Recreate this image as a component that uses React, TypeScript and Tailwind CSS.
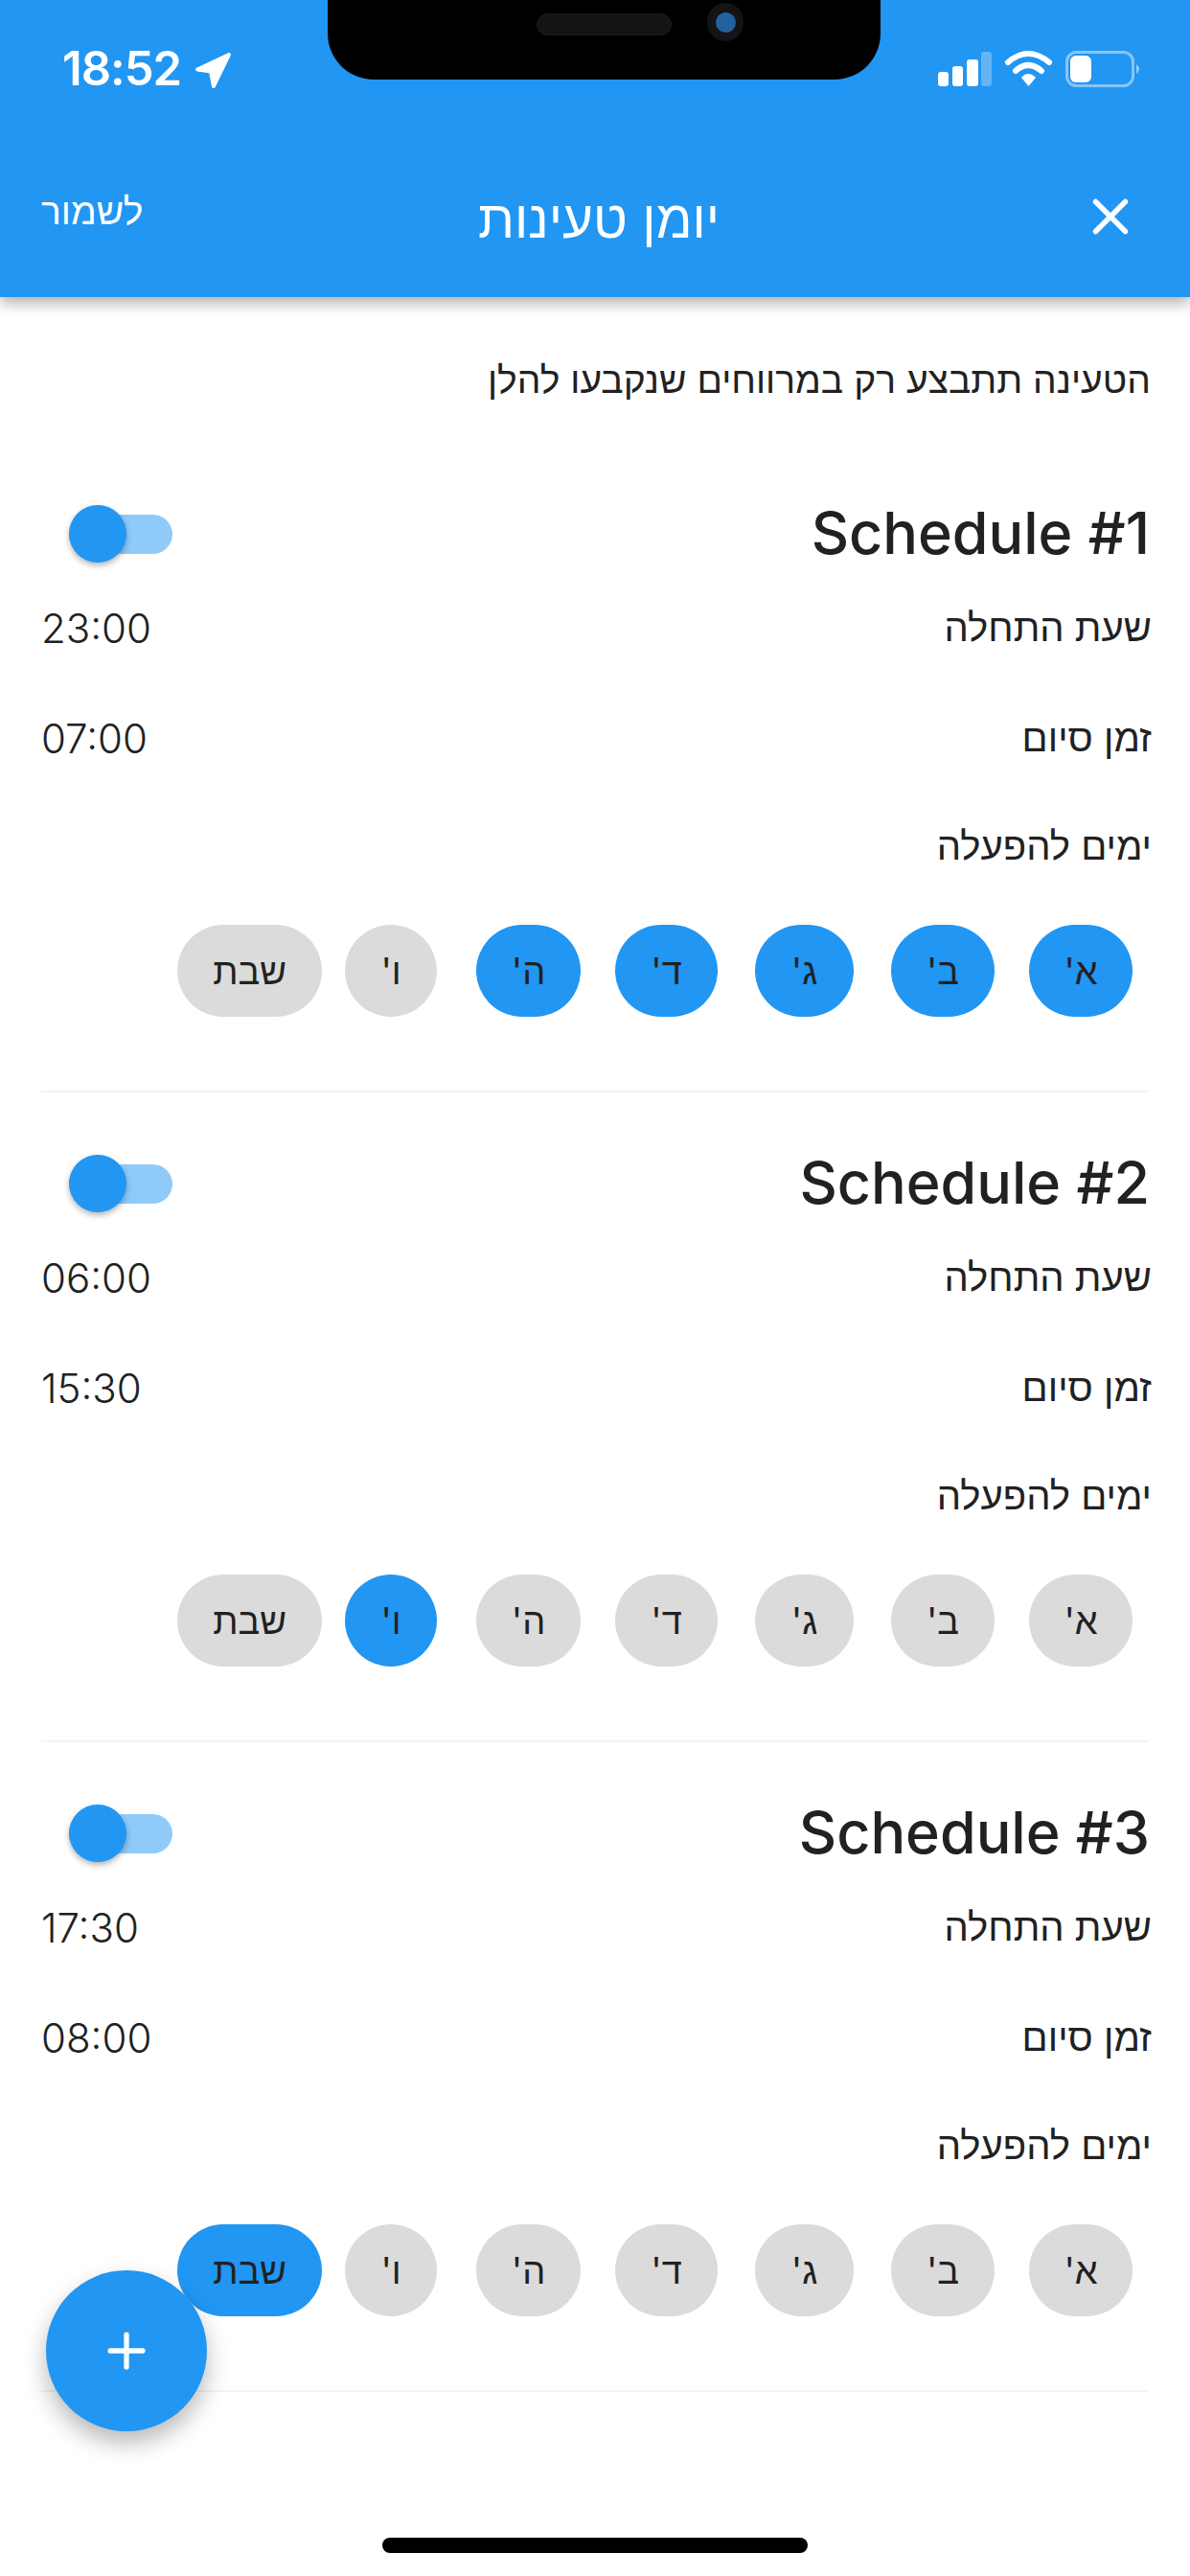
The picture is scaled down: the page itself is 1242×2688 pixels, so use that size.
import { Plus, X } from 'lucide-react';

const DAYS = [
    { label: "א'", width: 'w-[108px]', gap: 'me-[36px]' },
    { label: "ב'", width: 'w-[108px]', gap: 'me-[39px]' },
    { label: "ג'", width: 'w-[103px]', gap: 'me-[39px]' },
    { label: "ד'", width: 'w-[107px]', gap: 'me-[36px]' },
    { label: "ה'", width: 'w-[109px]', gap: 'me-[41px]' },
    { label: "ו'", width: 'w-[96px]', gap: 'me-[24px]' },
    { label: 'שבת', width: 'w-[151px]', gap: '' },
];

const SCHEDULES = [
    { name: 'Schedule #1', start: '23:00', end: '07:00', active: [0, 1, 2, 3, 4] },
    { name: 'Schedule #2', start: '06:00', end: '15:30', active: [5] },
    { name: 'Schedule #3', start: '17:30', end: '08:00', active: [6] },
];

function StatusBar() {
    return (
        <div className="absolute z-20 top-0 left-0 w-full h-[92px]" dir="ltr">
            {/* Notch */}
            <div className="absolute left-[342px] top-0 w-[577px] h-[83px] bg-black rounded-b-[48px]">
                <div className="absolute left-[218px] top-[14px] w-[141px] h-[23px] rounded-full bg-[#141414] border border-[#1c1c1c]" />
                <div className="absolute left-[396px] top-[3px] w-[38px] h-[40px] rounded-full bg-[#141416] flex items-center justify-center">
                    <div className="w-[21px] h-[21px] rounded-full bg-[#23609f]" />
                </div>
            </div>
            <div className="absolute left-[65px] top-[43px] h-[58px] flex items-center text-white text-[49px] font-semibold tracking-[-1px]">
                18:52
            </div>
            <svg className="absolute left-[203px] top-[54px]" width="39" height="39" viewBox="0 0 39 39">
                <path d="M36 3 L3 18.500 L17 20.500 L20 36 Z" fill="#fff" stroke="#fff" strokeWidth="4" strokeLinejoin="round" />
            </svg>
            <svg className="absolute left-[979px] top-[52px]" width="215" height="40" viewBox="0 0 215 40">
                <rect x="0" y="23" width="11" height="15" rx="3" fill="#fff" />
                <rect x="15" y="17" width="11" height="21" rx="3" fill="#fff" />
                <rect x="30" y="10" width="12" height="28" rx="3" fill="#fff" />
                <rect x="45" y="2" width="11" height="36" rx="3" fill="#fff" fillOpacity="0.3" />
                <path d="M73 13 Q94 -5 116 13" fill="none" stroke="#fff" strokeWidth="6" strokeLinecap="round" />
                <path d="M81 22 Q94 10 108 22" fill="none" stroke="#fff" strokeWidth="6" strokeLinecap="round" />
                <path d="M87 29 Q94 21 102 29 L94.500 38 Z" fill="#fff" />
                <rect x="134.500" y="2.500" width="69" height="35" rx="10" fill="none" stroke="#fff" strokeOpacity="0.45" strokeWidth="3" />
                <rect x="138" y="6" width="22" height="28" rx="6" fill="#fff" />
                <path d="M207 15 Q213 20 207 25 Z" fill="#fff" fillOpacity="0.5" />
            </svg>
        </div>
    );
}

function AppBar() {
    return (
        <header className="relative z-10 h-[310px] bg-[#2196f3] shadow-[0_6px_14px_rgba(0,0,0,0.32)] pt-[178px] px-[43px] flex items-start justify-between text-white">
            <div className="w-[66px] h-[96px] flex items-center justify-center me-[7px] ms-[7px]">
                <X size={62} strokeWidth={2.1} />
            </div>
            <h1 className="text-[55px] leading-[100px] ms-[24px]">יומן טעינות</h1>
            <button className="text-[39px] leading-[84px] w-[112px] text-left">לשמור</button>
        </header>
    );
}

function Schedule({ name, start, end, active }: (typeof SCHEDULES)[number]) {
    return (
        <section className="pt-[55px] border-b-[2px] border-[#f3f3f3] h-[678px]">
            <div className="flex items-center justify-between h-[80px]">
                <h2 className="text-[61px] font-medium -ms-[1px] text-[#212121]">{name}</h2>
                <div className="relative w-[108px] h-[41px] rounded-full bg-[#90caf9] me-[29px]">
                    <div className="absolute left-0 top-[-10px] w-[60px] h-[60px] rounded-full bg-[#2196f3] shadow-[0_3px_6px_rgba(0,0,0,0.3)]" />
                </div>
            </div>
            <div className="mt-[28px] flex items-center justify-between h-[60px] text-[40px]">
                <span className="-ms-[3px]">שעת התחלה</span>
                <span className="text-[42px] font-light">{start}</span>
            </div>
            <div className="mt-[55px] flex items-center justify-between h-[60px] text-[40px]">
                <span className="-ms-[3px]">זמן סיום</span>
                <span className="text-[42px] font-light">{end}</span>
            </div>
            <div className="mt-[53px] flex items-center h-[60px] text-[40px]">
                <span className="-ms-[3px]">ימים להפעלה</span>
            </div>
            <div className="mt-[52px] flex pe-[17px] ps-[17px]">
                {DAYS.map((day, i) => (
                    <div
                        key={day.label}
                        className={`${day.width} ${day.gap} h-[96px] rounded-full flex items-center justify-center text-[38px] ${active.includes(i) ? 'bg-[#2196f3]' : 'bg-[#dbdbdb]'}`}
                    >
                        {day.label}
                    </div>
                ))}
            </div>
        </section>
    );
}

export default function App() {
    return (
        <div
            dir="rtl"
            className="relative w-[1242px] h-[2688px] overflow-hidden bg-white text-[#212121] font-['Inter','Liberation_Sans',sans-serif]"
        >
            <AppBar />
            <StatusBar />

            <main className="px-[43px]">
                <p className="mt-[61px] -ms-[2px] h-[50px] text-[39px] leading-[50px]">הטעינה תתבצע רק במרווחים שנקבעו להלן</p>
                <div className="mt-[41px]">
                    {SCHEDULES.map((s) => (
                        <Schedule key={s.name} {...s} />
                    ))}
                </div>
            </main>

            {/* FAB */}
            <button className="absolute left-[48px] top-[2369px] w-[168px] h-[168px] rounded-full bg-[#2196f3] text-white flex items-center justify-center shadow-[0_12px_24px_rgba(0,0,0,0.28)]">
                <Plus size={58} strokeWidth={2.2} />
            </button>

            {/* Home indicator */}
            <div className="absolute left-[399px] top-[2648px] w-[444px] h-[16px] rounded-full bg-black" />
        </div>
    );
}
